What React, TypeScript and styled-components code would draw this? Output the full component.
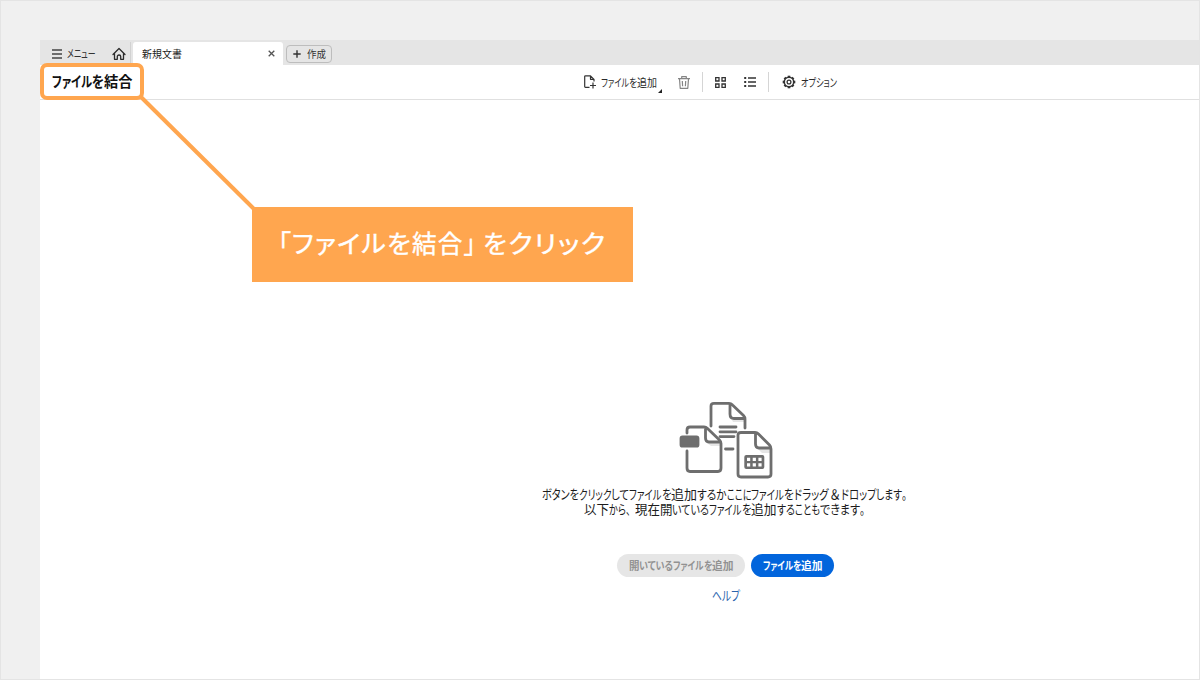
import React, { useLayoutEffect, useRef, useState } from 'react';
import styled, { createGlobalStyle } from 'styled-components';

const GlobalStyle = createGlobalStyle`
  * { box-sizing: border-box; }
  body { margin: 0; font-family: "Noto Sans CJK JP", sans-serif; color: #222; }
`;

const Page = styled.div`
  position: relative;
  width: 1200px;
  height: 680px;
  padding: 39px 0 0 39px;
  overflow: hidden;
  background: #f0f0f0;
  border: 1px solid #e4e4e4;
`;

const AppWindow = styled.div`
  display: flex;
  flex-direction: column;
  height: 100%;
  background: #fff;
`;

const TabBar = styled.div`
  display: flex;
  height: 25px;
  padding-top: 2px;
  background: #e5e5e5;
`;

const MenuButton = styled.div`
  display: flex;
  align-items: center;
  width: 72px;
  padding-left: 12px;
  gap: 5px;
`;

const HomeButton = styled.div`
  display: flex;
  align-items: center;
  width: 19px;
  margin-right: 2px;
  border-right: 1px solid #d2d2d2;
`;

const DocTab = styled.div`
  display: flex;
  align-items: center;
  justify-content: space-between;
  width: 150px;
  padding: 0 8px 0 9px;
  border-radius: 3px 3px 0 0;
  background: #fff;
`;

const CreateButton = styled.div`
  display: flex;
  align-items: center;
  align-self: flex-start;
  width: 46px;
  height: 18px;
  margin: 3px 0 0 3px;
  padding: 0 0 1px 6px;
  gap: 6px;
  border: 1px solid #bdbdbd;
  border-radius: 4px;
`;

const Toolbar = styled.div`
  display: flex;
  align-items: center;
  height: 35px;
  padding-left: 12px;
  border-bottom: 1px solid #e0e0e0;
`;

const Title = styled.div`
  width: 532px;
  padding-bottom: 2px;
`;

const ToolItem = styled.div<{ $width: number }>`
  display: flex;
  align-items: center;
  flex: none;
  width: ${(p) => p.$width}px;
  gap: 5px;
`;

const Divider = styled.div<{ $gap: number }>`
  width: 1px;
  height: 20px;
  margin-right: ${(p) => p.$gap}px;
  background: #d5d5d5;
`;

const Corner = styled.svg`
  align-self: flex-end;
  margin: 0 0 -2px -4px;
`;

const DropArea = styled.div`
  display: flex;
  flex-direction: column;
  align-items: center;
  padding: 300px 0 0 212px;
`;

const Illustration = styled.svg`
  display: block;
  margin-bottom: 6px;
`;

const Actions = styled.div`
  display: flex;
  gap: 6px;
  margin: 38px 0 10px;
`;

const Pill = styled.div<{ $primary?: boolean }>`
  display: flex;
  align-items: center;
  justify-content: center;
  width: ${(p) => (p.$primary ? 83 : 128)}px;
  height: 23px;
  padding-bottom: 1px;
  border-radius: 12px;
  background: ${(p) => (p.$primary ? '#0265dc' : '#e6e6e6')};
`;

const Run = styled.div<{
  $size: number; $bold?: boolean; $color?: string; $height?: number; $spacing?: number;
}>`
  display: flex;
  flex: none;
  font-size: ${(p) => p.$size}px;
  line-height: ${(p) => p.$height ?? 15}px;
  font-weight: ${(p) => (p.$bold ? 700 : 400)};
  font-feature-settings: "palt";
  letter-spacing: ${(p) => p.$spacing ?? 0}px;
  color: ${(p) => p.$color ?? '#1c1c1c'};
`;

const Segment = styled.span<{ $width: number }>`
  display: block;
  width: ${(p) => p.$width}px;
  white-space: nowrap;
`;

const Squeeze = styled.span<{ $ratio: number }>`
  display: block;
  width: max-content;
  transform: scaleX(${(p) => p.$ratio});
  transform-origin: left center;
`;

const Highlight = styled.div`
  position: absolute;
  left: 39px;
  top: 62px;
  width: 104px;
  height: 37px;
  border: 4px solid #ffa64f;
  border-radius: 7px;
`;

const Connector = styled.svg`
  position: absolute;
  left: 129px;
  top: 89px;
`;

const Callout = styled.div`
  position: absolute;
  left: 251px;
  top: 206px;
  display: flex;
  align-items: center;
  width: 381px;
  height: 75px;
  padding: 0 0 4px 26px;
  background: #ffa64f;
  -webkit-text-stroke: 0.4px #fff;
`;

type Piece = [text: string, width: number];

/** One stretch of text, condensed or widened to take exactly the given advance. */
function Fitted({ text, width }: { text: string; width: number }) {
  const ref = useRef<HTMLSpanElement>(null);
  const [ratio, setRatio] = useState(1);
  useLayoutEffect(() => {
    const style = ref.current && getComputedStyle(ref.current);
    if (style) setRatio(width / parseFloat(style.width));
  }, [text, width]);
  return (
    <Segment $width={width}>
      <Squeeze ref={ref} $ratio={ratio}>{text}</Squeeze>
    </Segment>
  );
}

function Text({ pieces, size, bold, color, height, spacing }: {
  pieces: Piece[]; size: number; bold?: boolean; color?: string; height?: number; spacing?: number;
}) {
  return (
    <Run $size={size} $bold={bold} $color={color} $height={height} $spacing={spacing}>
      {pieces.map(([text, width], i) => (
        text ? <Fitted key={i} text={text} width={width} /> : <Segment key={i} $width={width} />
      ))}
    </Run>
  );
}

const Files = () => (
  <Illustration width="96" height="80" viewBox="678 400 96 80" fill="none" stroke="#6e6e6e" strokeWidth="2.800" strokeLinecap="round" strokeLinejoin="round">
    <path d="M732 420H745V422H733z" fill="#e6e6e6" stroke="none" />
    <path d="M711 426V406Q711 403.300 714 403.300H729Q731 403.300 732.500 405L743.500 415.500Q745 417 745 419V428M730 404V414Q730 418.500 734 418.500H745" />
    <path d="M720 427H736M720 431.800H736M720 436.600H734M725.500 449H733" />
    <path d="M707 443H721V446H711z" fill="#e6e6e6" stroke="none" />
    <path d="M687 433V430Q687 427 690 427H704Q706 427 707.500 428.500L719.500 440Q721 441.500 721 443.500V468Q721 471.500 718 471.500H690Q687 471.500 687 468V451M705.500 428V438Q705.500 442 709 442H720" />
    <rect x="681" y="437" width="17" height="9.200" rx="1.500" fill="#6e6e6e" />
    <path d="M758 449H771V453H762z" fill="#e6e6e6" stroke="none" />
    <path d="M738 435Q738 432.500 741 432.500H755Q757 432.500 758.500 434L769.500 445Q771 446.500 771 449V474Q771 477 768 477H741Q738 477 738 474zM755.500 433V444Q755.500 448 759 448H770" />
    <rect x="744.300" y="455" width="20" height="14" rx="2" fill="#6e6e6e" stroke="none" />
    <path d="M747 457.700h3.200v3.200h-3.200zM752.700 457.700h3.200v3.200h-3.200zM758.400 457.700h3.200v3.200h-3.200zM747 463.200h3.200v3.200h-3.200zM752.700 463.200h3.200v3.200h-3.200zM758.400 463.200h3.200v3.200h-3.200z" fill="#fff" stroke="none" />
  </Illustration>
);

const gear = Array.from({ length: 8 }, (_, i) => i * 45);

export default function App() {
  return (
    <Page>
      <GlobalStyle />
      <AppWindow>
        <TabBar>
          <MenuButton>
            <svg width="10" height="10" viewBox="0 0 10 10" stroke="#444" strokeWidth="1.300">
              <path d="M0 1H10M0 5H10M0 9H10" />
            </svg>
            <Text size={11.5} color="#333" pieces={[['メニュー', 28.5]]} />
          </MenuButton>
          <HomeButton>
            <svg width="14" height="14" viewBox="0 0 14 14" fill="none" stroke="#2c2c2c" strokeWidth="1.300" strokeLinejoin="round" strokeLinecap="round">
              <path d="M1 7.500L7 1.500L13 7.500M2.500 6.500V12.300H5.300V9.500Q5.300 8 7 8T8.700 9.500V12.300H11.500V6.500" />
            </svg>
          </HomeButton>
          <DocTab>
            <Text size={10.5} pieces={[['新規文書', 40]]} />
            <svg width="7" height="7" viewBox="0 0 7 7" stroke="#555" strokeWidth="1.300">
              <path d="M.7 .7L6.300 6.300M6.300 .7L.7 6.300" />
            </svg>
          </DocTab>
          <CreateButton>
            <svg width="8" height="8" viewBox="0 0 8 8" stroke="#333" strokeWidth="1.400">
              <path d="M4 .3V7.700M.3 4H7.700" />
            </svg>
            <Text size={10} color="#333" pieces={[['作成', 19]]} />
          </CreateButton>
        </TabBar>
        <Toolbar>
          <Title>
            <Text size={14.5} bold color="#111" height={20} pieces={[['ファイル', 40], ['を', 12], ['結合', 28.5]]} />
          </Title>
          <ToolItem $width={94}>
            <svg width="12" height="14" viewBox="0 0 12 14" fill="none" stroke="#333" strokeWidth="1.200" strokeLinejoin="round">
              <path d="M5.500 12.300H1.500Q.7 12.300 .7 11.500V1.600Q.7 .8 1.500 .8H6.500L10 4.300V6.500M6.500 .8V4.300H10M9 7.500V13.500M6 10.500H12" />
            </svg>
            <Text size={11} color="#2a2a2a" height={17} pieces={[['ファイル', 28], ['を', 8], ['追加', 20]]} />
            <Corner width="4" height="4" viewBox="0 0 4 4"><path d="M4 0V4H0z" fill="#222" /></Corner>
          </ToolItem>
          <ToolItem $width={24}>
            <svg width="12" height="13" viewBox="0 0 12 13" fill="none" stroke="#858585" strokeWidth="1.200" strokeLinejoin="round">
              <path d="M0 2.700H12M3.700 2.700V.7H8.300V2.700M1.500 2.700L2.200 12.300H9.800L10.500 2.700M4.300 5L4.600 10.200M7.700 5L7.400 10.200" />
            </svg>
          </ToolItem>
          <Divider $gap={12} />
          <ToolItem $width={29}>
            <svg width="11" height="11" viewBox="0 0 11 11" fill="none" stroke="#333" strokeWidth="1.300">
              <path d="M.7 .7h3.300v3.300H.7zM7 .7h3.300v3.300H7zM.7 7h3.300v3.300H.7zM7 7h3.300v3.300H7z" />
            </svg>
          </ToolItem>
          <ToolItem $width={24}>
            <svg width="12" height="10" viewBox="0 0 12 10" stroke="#333" strokeWidth="1.300">
              <path d="M4 1H12M4 5H12M4 9H12" />
              <path d="M.2 1H2.200M.2 5H2.200M.2 9H2.200" strokeWidth="2" />
            </svg>
          </ToolItem>
          <Divider $gap={13} />
          <ToolItem $width={60}>
            <svg width="14" height="14" viewBox="-7 -7 14 14" fill="none" stroke="#333" strokeWidth="1.500">
              <circle r="4.700" />
              <circle r="1.900" strokeWidth="1.300" />
              {gear.map((a) => <path key={a} d="M0-4.500V-6.300" strokeWidth="2.600" transform={`rotate(${a})`} />)}
            </svg>
            <Text size={11.5} color="#2a2a2a" height={17} pieces={[['オプション', 36]]} />
          </ToolItem>
        </Toolbar>
        <DropArea>
          <Files />
          <Text size={13} height={15} pieces={[
            ['ボタンを', 37], ['クリック', 32.5], ['して', 18], ['ファイル', 32.5], ['を', 9.5], ['追加', 26],
            ['するか', 29.5], ['ここに', 24.5], ['ファイル', 33], ['を', 10], ['ドラッグ', 34.5], ['', 1], ['＆', 10],
            ['', 1], ['ドロップ', 35.5], ['します', 26], ['。', 5], ['', 2],
          ]} />
          <Text size={13} height={15} pieces={[
            ['以下', 25], ['から', 17], ['、', 4.5], ['', 4], ['現在開', 37.5], ['いている', 37], ['ファイル', 32.5],
            ['を', 9.5], ['追加', 25.5], ['する', 18], ['ことも', 25], ['できます', 40], ['。', 5], ['', 2],
          ]} />
          <Actions>
            <Pill>
              <Text size={11} bold color="#929292" pieces={[['開', 10.5], ['いている', 34], ['ファイル', 30.5], ['を', 8.5], ['追加', 21.5]]} />
            </Pill>
            <Pill $primary>
              <Text size={11} bold color="#fff" pieces={[['ファイル', 30], ['を', 8.5], ['追加', 21.5]]} />
            </Pill>
          </Actions>
          <Text size={13} color="#2a63ad" pieces={[['ヘルプ', 28]]} />
        </DropArea>
      </AppWindow>
      <Connector width="130" height="124" viewBox="130 90 130 124">
        <path d="M141 97L254 209" stroke="#ffa64f" strokeWidth="4" />
      </Connector>
      <Highlight />
      <Callout>
        <Text size={24.5} color="#fff" height={36} spacing={1.2} pieces={[
          ['「', 14], ['ファイル', 95], ['を', 25], ['結合', 51.5], ['」', 13], ['', 6.5], ['を', 25], ['クリック', 98.5],
        ]} />
      </Callout>
    </Page>
  );
}
